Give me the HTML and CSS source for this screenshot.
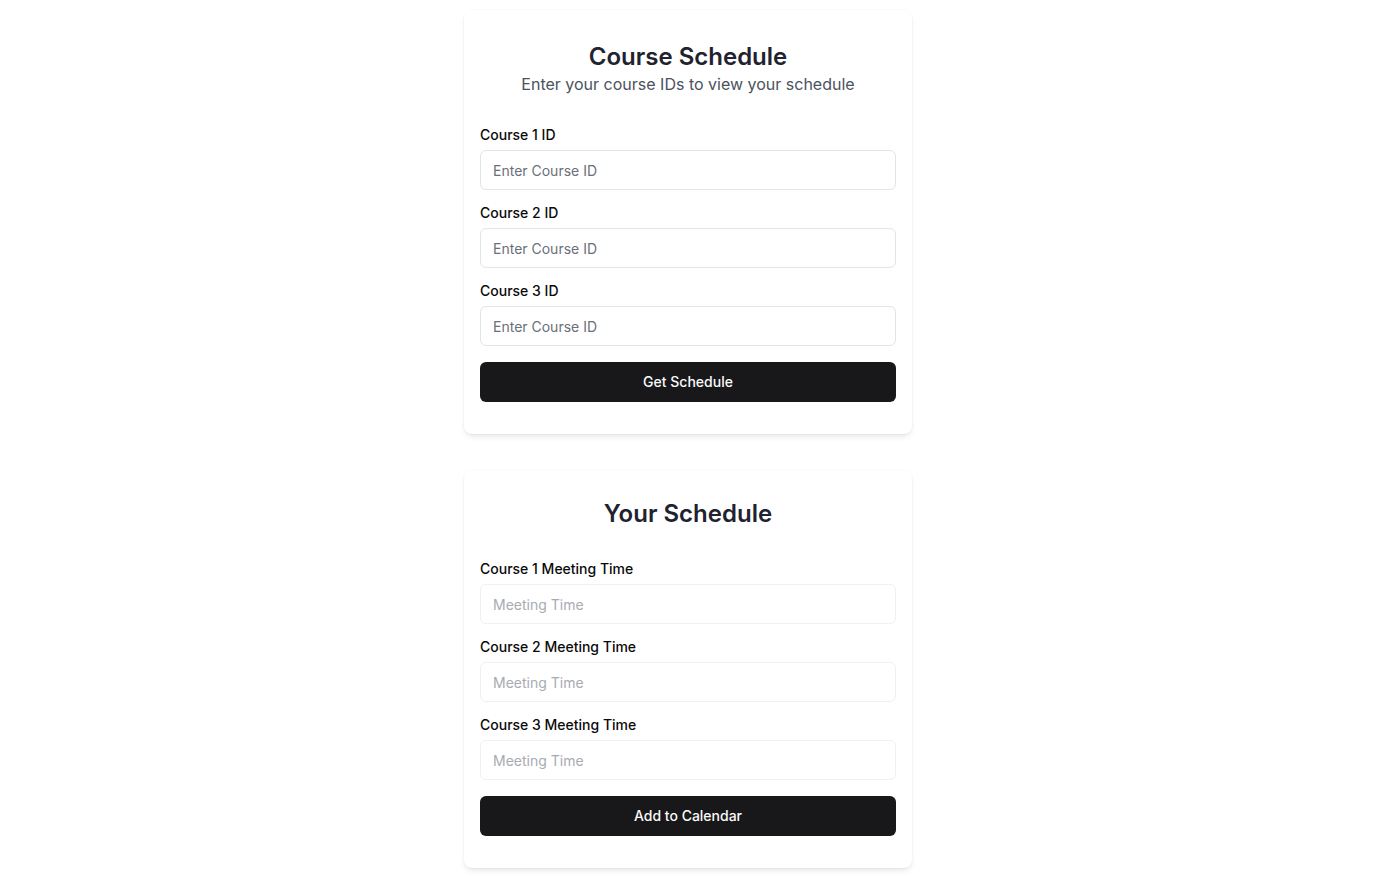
FILE: index.html
```html
<!DOCTYPE html>
<html lang="en">
<head>
<meta charset="utf-8">
<title>Course Schedule</title>
<link rel="stylesheet" href="styles.css">
</head>
<body>
<main class="page">
  <section class="card card-search">
    <header class="card-header">
      <h1 class="card-title">Course Schedule</h1>
      <p class="card-subtitle">Enter your course IDs to view your schedule</p>
    </header>
    <form class="form">
      <div class="field">
        <label class="label" for="c1">Course 1 ID</label>
        <input class="input" id="c1" type="text" placeholder="Enter Course ID">
      </div>
      <div class="field">
        <label class="label" for="c2">Course 2 ID</label>
        <input class="input" id="c2" type="text" placeholder="Enter Course ID">
      </div>
      <div class="field">
        <label class="label" for="c3">Course 3 ID</label>
        <input class="input" id="c3" type="text" placeholder="Enter Course ID">
      </div>
      <button class="button" type="button">Get Schedule</button>
    </form>
  </section>

  <section class="card card-result">
    <header class="card-header">
      <h2 class="card-title">Your Schedule</h2>
    </header>
    <form class="form">
      <div class="field">
        <label class="label" for="m1">Course 1 Meeting Time</label>
        <input class="input input-readonly" id="m1" type="text" placeholder="Meeting Time" readonly>
      </div>
      <div class="field">
        <label class="label" for="m2">Course 2 Meeting Time</label>
        <input class="input input-readonly" id="m2" type="text" placeholder="Meeting Time" readonly>
      </div>
      <div class="field">
        <label class="label" for="m3">Course 3 Meeting Time</label>
        <input class="input input-readonly" id="m3" type="text" placeholder="Meeting Time" readonly>
      </div>
      <button class="button" type="button">Add to Calendar</button>
    </form>
  </section>
</main>
</body>
</html>
```

FILE: styles.css
```css
* {
  box-sizing: border-box;
}

html, body {
  margin: 0;
  padding: 0;
  background: #ffffff;
  font-family: Inter, "Noto Sans", "Liberation Sans", sans-serif;
  color: #0a0a0a;
}

.page {
  display: flex;
  flex-direction: column;
  align-items: center;
  gap: 36px;
  padding-top: 10px;
  padding-bottom: 8px;
}

.card {
  width: 448px;
  background: #ffffff;
  border-radius: 8px;
  box-shadow: 0 4px 6px -1px rgba(0, 0, 0, 0.08), 0 2px 4px -2px rgba(0, 0, 0, 0.06), 0 0 0 1px rgba(0, 0, 0, 0.015);
  padding: 16px 16px 32px;
}

.card-header {
  text-align: center;
}

.card-search .card-header {
  padding-top: 15px;
  margin-bottom: 28px;
}

.card-search .card-title {
  line-height: 31px;
}

.card-result .card-header {
  padding-top: 12px;
  margin-bottom: 28px;
}

.card-title {
  margin: 0;
  font-size: 24px;
  line-height: 32px;
  font-weight: 600;
  color: #1f2330;
}

.card-subtitle {
  margin: 0;
  font-size: 16px;
  line-height: 24px;
  color: #4b5260;
}

.form {
  display: flex;
  flex-direction: column;
  margin: 0;
}

.field {
  display: flex;
  flex-direction: column;
  gap: 5px;
  margin-bottom: 13px;
}

.field:first-child {
  padding-top: 1px;
}

.field:last-of-type {
  margin-bottom: 16px;
}

.label {
  font-size: 14px;
  line-height: 20px;
  font-weight: 500;
  color: #0a0a0a;
}

.input {
  height: 40px;
  width: 100%;
  border: 1px solid #e3e4e8;
  border-radius: 6px;
  padding: 0 12px;
  font-family: inherit;
  font-size: 14px;
  color: #0a0a0a;
  background: #ffffff;
  outline: none;
}

.input::placeholder {
  color: #6b6f78;
}

.input-readonly {
  border-color: #f0f0f2;
}

.input-readonly::placeholder {
  color: #a8abb2;
}

.button {
  height: 40px;
  width: 100%;
  border: none;
  border-radius: 6px;
  background: #18181b;
  color: #fafafa;
  font-family: inherit;
  font-size: 14px;
  font-weight: 500;
  padding: 0 0 2px;
  cursor: pointer;
}
```
